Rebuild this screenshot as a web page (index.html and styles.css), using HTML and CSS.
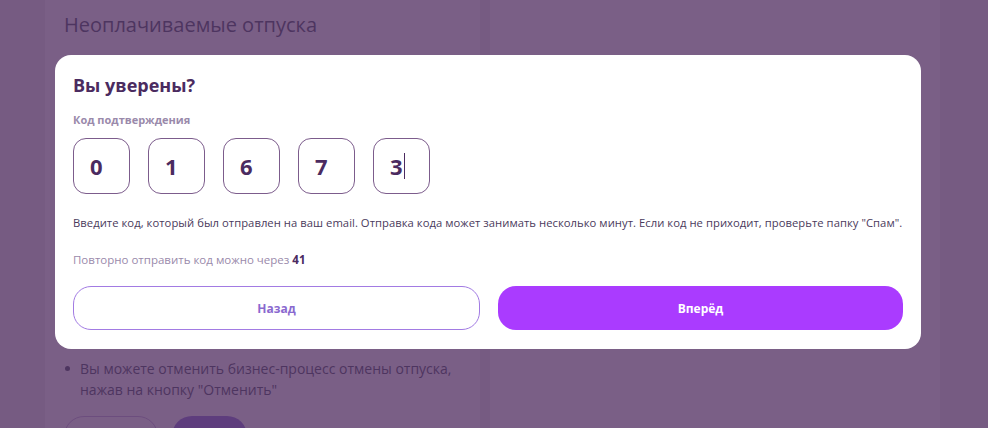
FILE: index.html
```html
<!DOCTYPE html>
<html lang="ru">

<head>
    <meta charset="UTF-8">
    <meta name="viewport" content="width=device-width, initial-scale=1.0">
    <title>Неоплачиваемые отпуска</title>
    <link rel="stylesheet" href="styles.css">
</head>

<body>
    <div class="page">
        <div class="card card-main">
            <h2 class="card-title">Неоплачиваемые отпуска</h2>
            <div class="card-spacer"></div>
            <ul class="notes">
                <li>Вы можете отменить бизнес-процесс отмены отпуска, нажав на кнопку "Отменить"</li>
            </ul>
            <div class="card-actions">
                <button class="page-btn page-btn-outline" aria-label="Отменить"></button>
                <button class="page-btn page-btn-fill" aria-label="Далее"></button>
            </div>
        </div>
        <div class="card card-side"></div>
    </div>

    <div class="overlay">
        <div class="modal">
            <h3 class="modal-title">Вы уверены?</h3>

            <div class="code-label">Код подтверждения</div>
            <div class="code-inputs">
                <div class="code-cell">0</div>
                <div class="code-cell">1</div>
                <div class="code-cell">6</div>
                <div class="code-cell">7</div>
                <div class="code-cell active">3<span class="caret"></span></div>
            </div>

            <p class="hint">Введите код, который был отправлен на ваш email. Отправка кода может занимать несколько минут. Если код не приходит, проверьте папку "Спам".</p>

            <p class="resend">Повторно отправить код можно через <b>41</b></p>

            <div class="modal-actions">
                <button class="btn btn-back">Назад</button>
                <button class="btn btn-next">Вперёд</button>
            </div>
        </div>
    </div>
</body>

</html>
```

FILE: styles.css
```css
* {
    margin: 0;
    padding: 0;
    box-sizing: border-box;
}

body {
    font-family: "Open Sans", "Noto Sans", sans-serif;
    background: #ece8ec;
    height: 100vh;
    overflow: hidden;
}

/* page under the overlay */
.page {
    display: flex;
    gap: 10px;
    padding: 0 48px 0 45px;
    height: 100%;
}

.card {
    background: #fdfcfd;
}

.card-main {
    width: 435px;
    padding: 10px 19px 0;
}

.card-side {
    flex: 1;
}

.card-title {
    font-size: 20px;
    font-weight: 400;
    color: #222d40;
    line-height: 30px;
}

.card-spacer {
    height: 318px;
}

.notes {
    list-style: none;
    font-size: 14px;
    line-height: 21px;
    color: #222d40;
    padding-left: 16px;
    position: relative;
}

.notes li::before {
    content: "";
    position: absolute;
    left: 1px;
    top: 8px;
    width: 5px;
    height: 5px;
    border-radius: 50%;
    background: #222d40;
}

.card-actions {
    display: flex;
    gap: 14px;
    margin-top: 16px;
}

.page-btn {
    height: 40px;
    border-radius: 20px;
    font-size: 14px;
    font-family: inherit;
}

.page-btn-outline {
    width: 94px;
    background: transparent;
    border: 1px solid #b9a7d6;
}

.page-btn-fill {
    width: 75px;
    background: #7255d1;
    border: none;
}

/* modal */
.overlay {
    position: fixed;
    inset: 0;
    background: rgba(89, 55, 104, 0.8);
    display: flex;
    justify-content: center;
    align-items: flex-start;
    padding: 55px 12px 0 0;
}

.modal {
    width: 866px;
    background: #ffffff;
    border-radius: 16px;
    padding: 16px 18px 19px;
    color: #4b2b60;
}

.modal-title {
    font-size: 18px;
    font-weight: 700;
    line-height: 28px;
}

.code-label {
    margin-top: 13px;
    font-size: 11px;
    font-weight: 700;
    color: #9a8aab;
    line-height: 16px;
}

.code-inputs {
    display: flex;
    gap: 18px;
    margin-top: 10px;
}

.code-cell {
    width: 57px;
    height: 56px;
    border: 1px solid #7c5c8c;
    border-radius: 13px;
    display: flex;
    align-items: center;
    padding-left: 16px;
    font-size: 22px;
    font-weight: 700;
    color: #4b2b60;
}

.caret {
    display: inline-block;
    width: 1px;
    height: 26px;
    background: #4b2b60;
    margin-left: 1px;
}

.hint {
    margin-top: 21px;
    font-size: 11.25px;
    line-height: 16px;
    color: #4a3a5c;
    letter-spacing: 0.04px;
    white-space: nowrap;
}

.resend {
    margin-top: 21px;
    font-size: 11.5px;
    line-height: 16px;
    color: #9a8aab;
}

.resend b {
    color: #4b2b60;
}

.modal-actions {
    display: flex;
    gap: 18px;
    margin-top: 18px;
}

.btn {
    flex: 1;
    height: 44px;
    border-radius: 18px;
    font-family: inherit;
    font-size: 12px;
    font-weight: 700;
    cursor: pointer;
}

.btn-back {
    background: #ffffff;
    border: 1.5px solid #a27be3;
    color: #8a69cf;
}

.btn-next {
    background: #aa3bff;
    border: none;
    color: #ffffff;
}
```
